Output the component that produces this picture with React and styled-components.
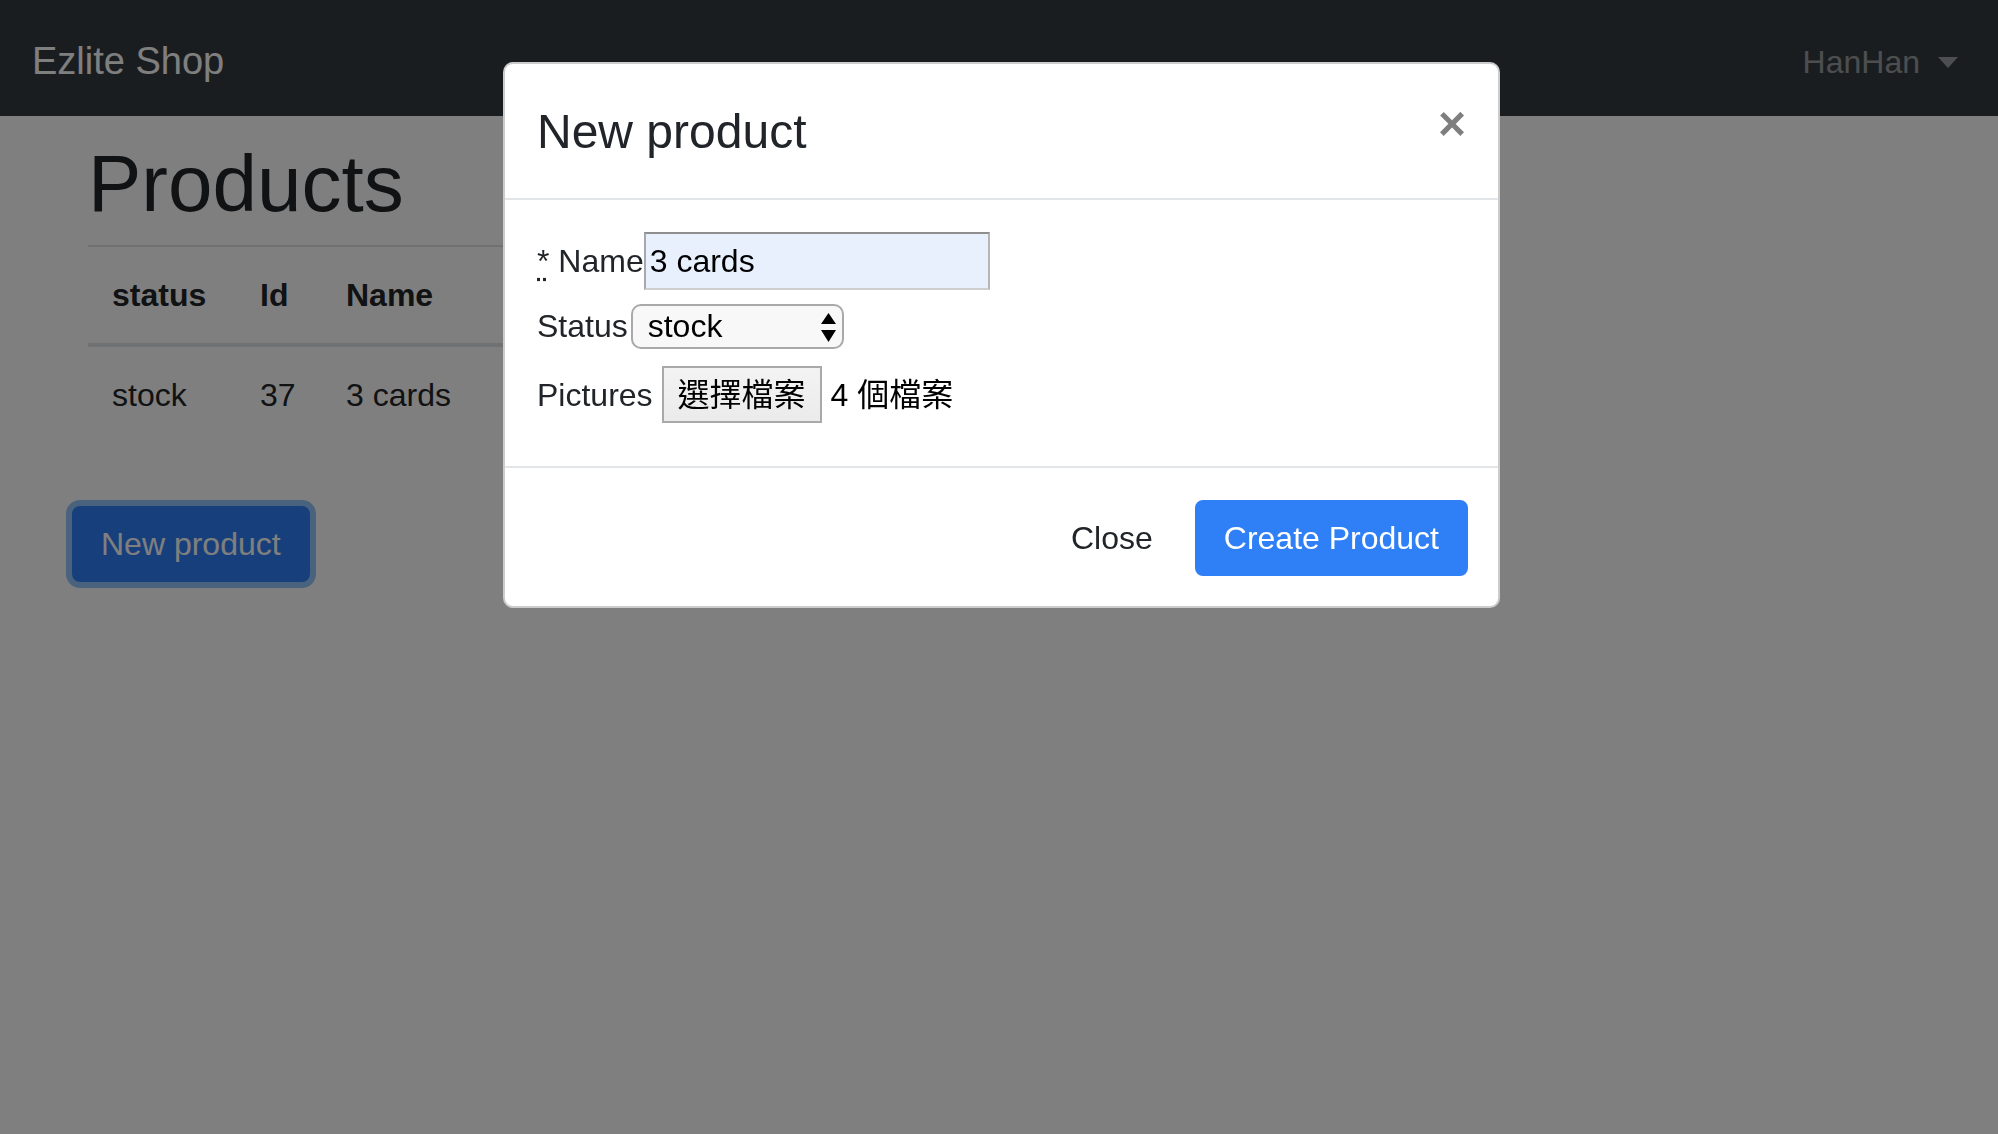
import styled, { createGlobalStyle } from "styled-components";

const GlobalStyle = createGlobalStyle`
  html, body {
    margin: 0;
    padding: 0;
    overflow: hidden;
  }
  body {
    font-family: "Liberation Sans", "Noto Sans CJK TC", sans-serif;
    font-size: 32px;
    line-height: 48px;
    color: #212529;
    background-color: #ffffff;
  }
  * {
    box-sizing: border-box;
  }
`;

const primary = "#2f7ff6";

const Page = styled.div`
  width: 100%;
  height: 100vh;
  display: flex;
  flex-direction: column;
`;

const Navbar = styled.nav`
  height: 116px;
  display: flex;
  align-items: center;
  justify-content: space-between;
  padding: 7px 40px 0 32px;
  background-color: #343a40;
`;

const Brand = styled.a`
  font-size: 38px;
  line-height: 57px;
  color: #ffffff;
  text-decoration: none;
`;

const UserMenu = styled.a`
  display: flex;
  align-items: center;
  gap: 18px;
  font-size: 32px;
  color: rgba(255, 255, 255, 0.5);
  text-decoration: none;
`;

const Caret = styled.span`
  width: 0;
  height: 0;
  border-top: 11px solid rgba(255, 255, 255, 0.5);
  border-left: 10.5px solid transparent;
  border-right: 10.5px solid transparent;
  margin-top: 2px;
`;

const Main = styled.main`
  padding-left: 72px;
`;

const Heading = styled.h1`
  margin: 20px 0 13px 16px;
  font-size: 80px;
  line-height: 96px;
  font-weight: 500;
`;

const Table = styled.table`
  margin: 0 0 63px 16px;
  border-collapse: collapse;
`;

const Th = styled.th`
  width: ${({ $w }) => ($w ? `${$w}px` : "auto")};
  padding: 24px;
  text-align: left;
  font-weight: 700;
  white-space: nowrap;
  border-top: 2px solid #dee2e6;
  border-bottom: 4px solid #dee2e6;
`;

const Td = styled.td`
  padding: 24px;
  white-space: nowrap;
`;

const Button = styled.button`
  display: inline-block;
  padding: ${({ $variant }) => ($variant === "primary" ? "12px 27px" : "12px 24px")};
  border: 2px solid ${({ $variant }) => ($variant === "primary" ? primary : "transparent")};
  border-radius: 8px;
  background-color: ${({ $variant }) => ($variant === "primary" ? primary : "transparent")};
  color: ${({ $variant }) => ($variant === "primary" ? "#ffffff" : "#212529")};
  font-family: inherit;
  font-size: 32px;
  line-height: 48px;
  box-shadow: ${({ $focused }) => ($focused ? "0 0 0 6px rgba(38, 143, 255, 0.5)" : "none")};
  cursor: pointer;
`;

const Backdrop = styled.div`
  position: fixed;
  inset: 0;
  background-color: rgba(0, 0, 0, 0.5);
`;

const ModalWrap = styled.div`
  position: fixed;
  inset: 0;
  overflow: hidden;
`;

const Dialog = styled.div`
  width: 997px;
  margin: 62px 0 0 503px;
  display: flex;
  flex-direction: column;
  background-color: #ffffff;
  border: 2px solid rgba(0, 0, 0, 0.2);
  border-radius: 10px;
`;

const ModalHeader = styled.div`
  display: flex;
  align-items: flex-start;
  justify-content: space-between;
  padding: 32px 0 30px 32px;
  border-bottom: 2px solid #e3e6e9;
`;

const ModalTitle = styled.div`
  font-size: 48px;
  line-height: 72px;
  font-weight: 500;
`;

const CloseX = styled.button`
  margin-top: 4px;
  padding: 0 32px 0 0;
  border: 0;
  background: transparent;
  font-family: "Liberation Sans", sans-serif;
  font-size: 48px;
  line-height: 48px;
  font-weight: 700;
  color: #000000;
  opacity: 0.5;
  cursor: pointer;
`;

const ModalBody = styled.div`
  padding: 32px;
`;

const FormRow = styled.div`
  display: flex;
  align-items: center;
  min-height: ${({ $h }) => $h}px;
  margin-bottom: ${({ $mb }) => $mb}px;
`;

const Label = styled.label`
  white-space: nowrap;
`;

const Required = styled.abbr`
  text-decoration: underline dotted;
  text-underline-offset: 6px;
  cursor: help;
`;

const TextInput = styled.input`
  width: 346px;
  height: 58px;
  margin-left: 0;
  padding: 0 4px;
  border-style: solid;
  border-width: 2px;
  border-color: #8e8e8e #b5b5b5 #cfcfcf #a8a8a8;
  background-color: #e8f0fe;
  font-family: inherit;
  font-size: 32px;
  color: #000000;
  outline: none;
`;

const SelectBox = styled.span`
  position: relative;
  display: inline-flex;
  margin-left: 3px;
`;

const Select = styled.select`
  appearance: none;
  width: 213px;
  height: 45px;
  padding: 0 0 0 15px;
  border: 2px solid #a9a9a9;
  border-radius: 10px;
  background-color: #f8f8f8;
  font-family: inherit;
  font-size: 32px;
  line-height: 41px;
  color: #000000;
  outline: none;
`;

const SelectArrows = styled.svg`
  position: absolute;
  right: 7px;
  top: 9px;
  pointer-events: none;
`;

const FileButton = styled.button`
  height: 57px;
  margin-left: 9px;
  padding: 0 14px;
  border: 2px solid #a9a9a9;
  background: linear-gradient(#f3f3f3, #ebebeb);
  font-family: "Liberation Sans", "Noto Sans CJK TC", sans-serif;
  font-size: 32px;
  line-height: 50px;
  color: #000000;
`;

const FileInfo = styled.span`
  margin-left: 9px;
  color: #000000;
  white-space: nowrap;
`;

const ModalFooter = styled.div`
  display: flex;
  align-items: center;
  justify-content: flex-end;
  gap: 16px;
  padding: 32px 30px 30px;
  border-top: 2px solid #e3e6e9;
`;

const App = () => {
  return (
    <>
      <GlobalStyle />
      <Page>
        <Navbar>
          <Brand href="#">Ezlite Shop</Brand>
          <UserMenu href="#">
            HanHan
            <Caret />
          </UserMenu>
        </Navbar>
        <Main>
          <Heading>Products</Heading>
          <Table>
            <thead>
              <tr>
                <Th $w={148}>status</Th>
                <Th $w={86}>Id</Th>
                <Th $w={158}>Name</Th>
                <Th>Pictures</Th>
                <Th>Actions</Th>
              </tr>
            </thead>
            <tbody>
              <tr>
                <Td>stock</Td>
                <Td>37</Td>
                <Td>3 cards</Td>
                <Td>4</Td>
                <Td>Edit</Td>
              </tr>
            </tbody>
          </Table>
          <Button $variant="primary" $focused>New product</Button>
        </Main>
      </Page>
      <Backdrop />
      <ModalWrap>
        <Dialog role="dialog">
          <ModalHeader>
            <ModalTitle>New product</ModalTitle>
            <CloseX aria-label="Close">×</CloseX>
          </ModalHeader>
          <ModalBody>
            <FormRow $h={58} $mb={12}>
              <Label>
                <Required title="required">*</Required> Name
              </Label>
              <TextInput defaultValue="3 cards" />
            </FormRow>
            <FormRow $h={45} $mb={16}>
              <Label>Status</Label>
              <SelectBox>
                <Select defaultValue="stock">
                  <option value="stock">stock</option>
                  <option value="sold">sold</option>
                </Select>
                <SelectArrows width="17" height="30" viewBox="0 0 17 30">
                  <polygon points="8.5,0 16,11 1,11" fill="#000" />
                  <polygon points="1,17 16,17 8.5,29" fill="#000" />
                </SelectArrows>
              </SelectBox>
            </FormRow>
            <FormRow $h={57} $mb={11}>
              <Label>Pictures</Label>
              <FileButton type="button">選擇檔案</FileButton>
              <FileInfo>4 個檔案</FileInfo>
            </FormRow>
          </ModalBody>
          <ModalFooter>
            <Button>Close</Button>
            <Button $variant="primary">Create Product</Button>
          </ModalFooter>
        </Dialog>
      </ModalWrap>
    </>
  );
};

export default App;
